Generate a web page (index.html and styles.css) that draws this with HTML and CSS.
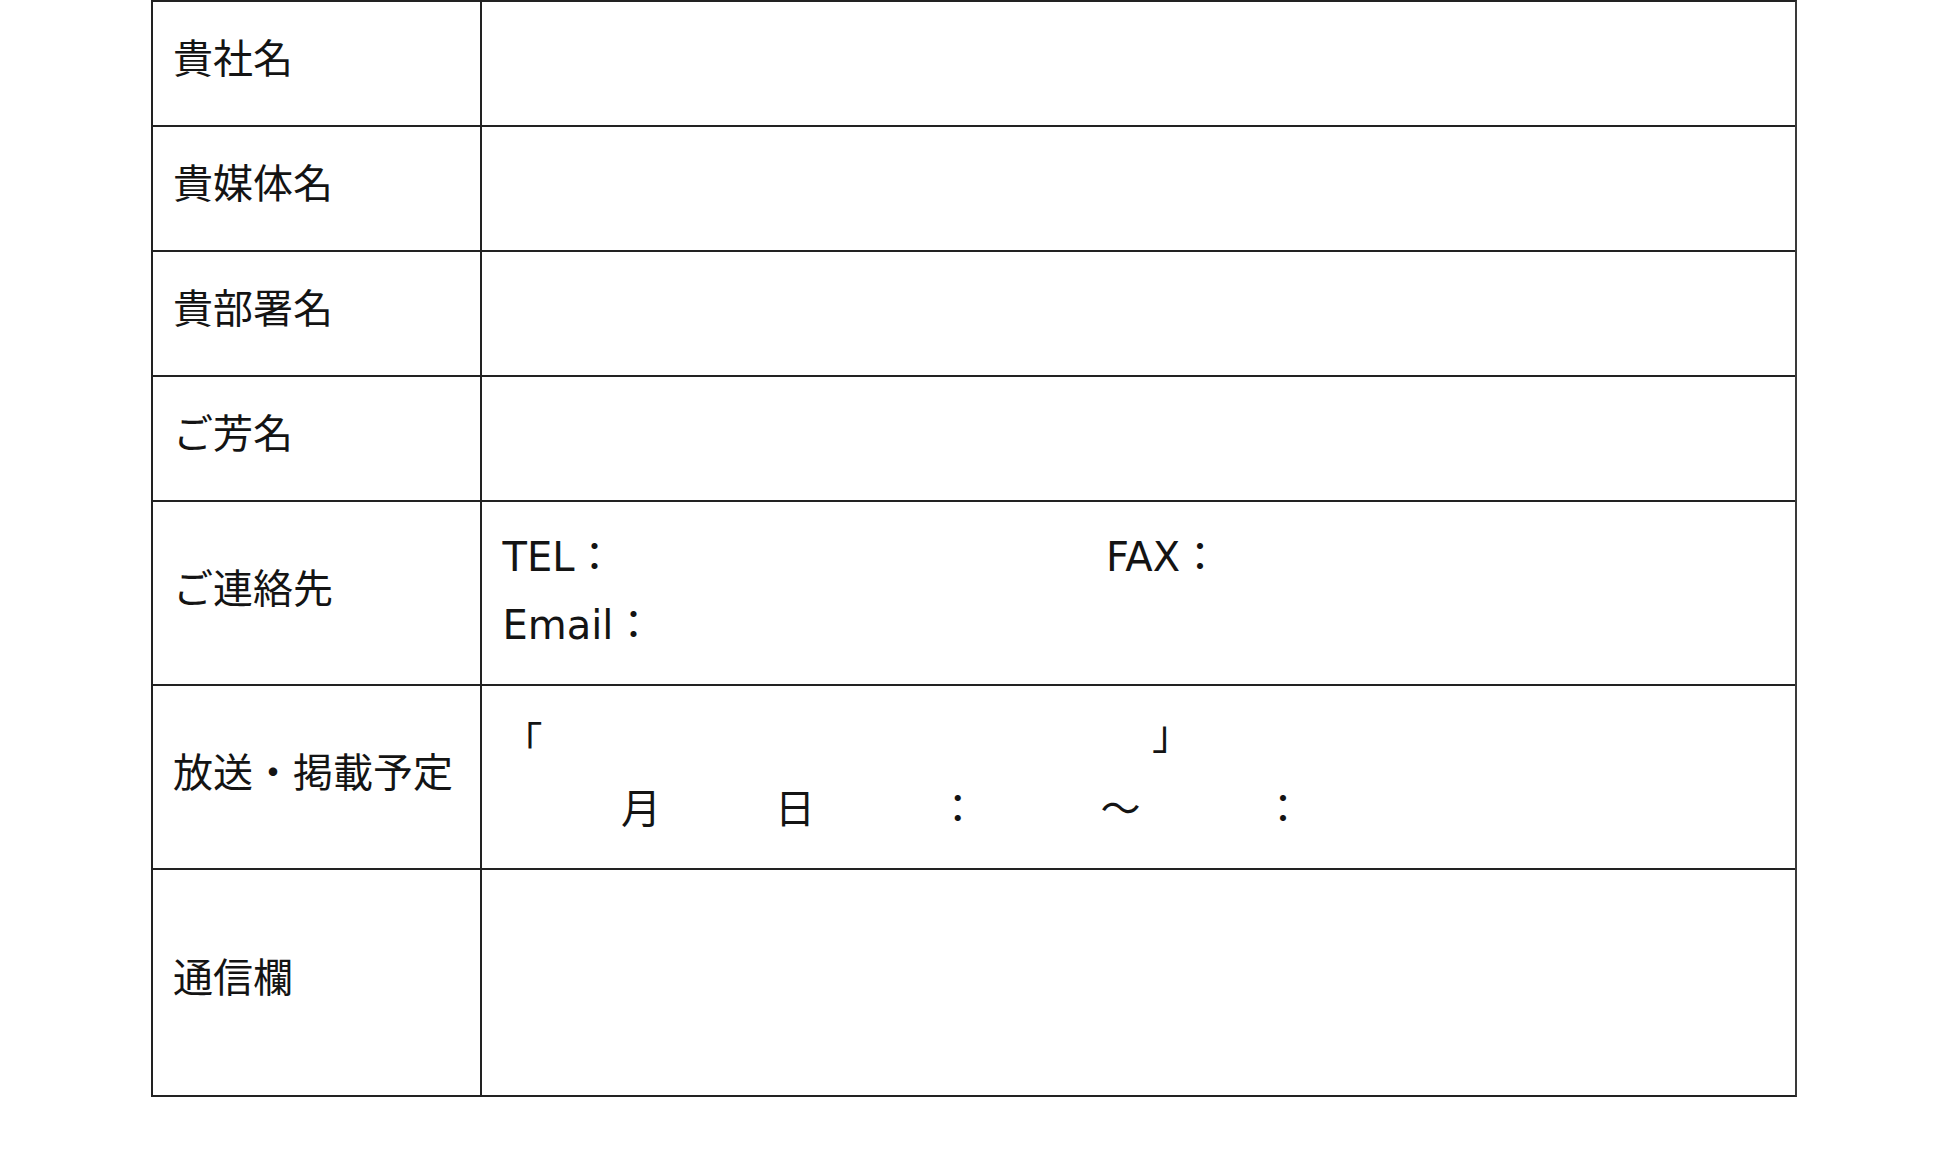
FILE: index.html
```html
<!DOCTYPE html>
<html lang="ja">
<head>
<meta charset="utf-8">
<title>取材申込書</title>
<link rel="stylesheet" href="styles.css">
</head>
<body>
<div class="sheet">
  <div class="row row-single">
    <div class="label">貴社名</div>
    <div class="value"></div>
  </div>
  <div class="row row-single">
    <div class="label">貴媒体名</div>
    <div class="value"></div>
  </div>
  <div class="row row-single">
    <div class="label">貴部署名</div>
    <div class="value"></div>
  </div>
  <div class="row row-single">
    <div class="label">ご芳名</div>
    <div class="value"></div>
  </div>
  <div class="row row-double">
    <div class="label">ご連絡先</div>
    <div class="value contact">
      <div class="line"><span class="tel">TEL：</span><span class="fax">FAX：</span></div>
      <div class="line">Email：</div>
    </div>
  </div>
  <div class="row row-double">
    <div class="label">放送・掲載予定</div>
    <div class="value schedule">
      <div class="line"><span class="bracket">「</span><span class="bracket bracket-close">」</span></div>
      <div class="line"><span class="slot slot-month">月</span><span class="slot slot-day">日</span><span class="slot">：</span><span class="slot">～</span><span class="slot">：</span></div>
    </div>
  </div>
  <div class="row row-tall">
    <div class="label">通信欄</div>
    <div class="value"></div>
  </div>
</div>
</body>
</html>
```
FILE: styles.css
```css
html, body {
  margin: 0;
  padding: 0;
  background: #ffffff;
}

body {
  font-family: "DejaVu Sans", "Noto Sans CJK JP", sans-serif;
  font-size: 40px;
  color: #141414;
}

.sheet {
  box-sizing: border-box;
  width: 1646px;
  margin-left: 151px;
  border: 2px solid #222222;
  border-right-color: #3a3a3a;
}

.row {
  box-sizing: border-box;
  display: grid;
  grid-template-columns: 329px 1fr;
  border-bottom: 2px solid #222222;
}

.row:last-child {
  border-bottom: none;
}

.row-single { height: 125px; }
.row-double { height: 184px; }
.row-tall { height: 225px; }

.label {
  box-sizing: border-box;
  display: flex;
  align-items: center;
  padding: 0 20px 9px 20px;
  border-right: 2px solid #222222;
  line-height: 40px;
  white-space: nowrap;
}

.value {
  display: flex;
  flex-direction: column;
  justify-content: center;
  padding: 0 20px 0 20.5px;
  white-space: nowrap;
}

.contact {
  padding-bottom: 5px;
}

.contact .line {
  line-height: 68px;
}

.tel {
  display: inline-block;
  width: 603.5px;
}

.schedule {
  padding-bottom: 9px;
}

.schedule .line {
  line-height: 67px;
}

.bracket-close {
  margin-left: 609.5px;
  vertical-align: 7px;
}

.slot {
  margin-left: 122.7px;
}

.slot-month {
  margin-left: 118.5px;
}

.slot-day {
  margin-left: 114px;
}
```
